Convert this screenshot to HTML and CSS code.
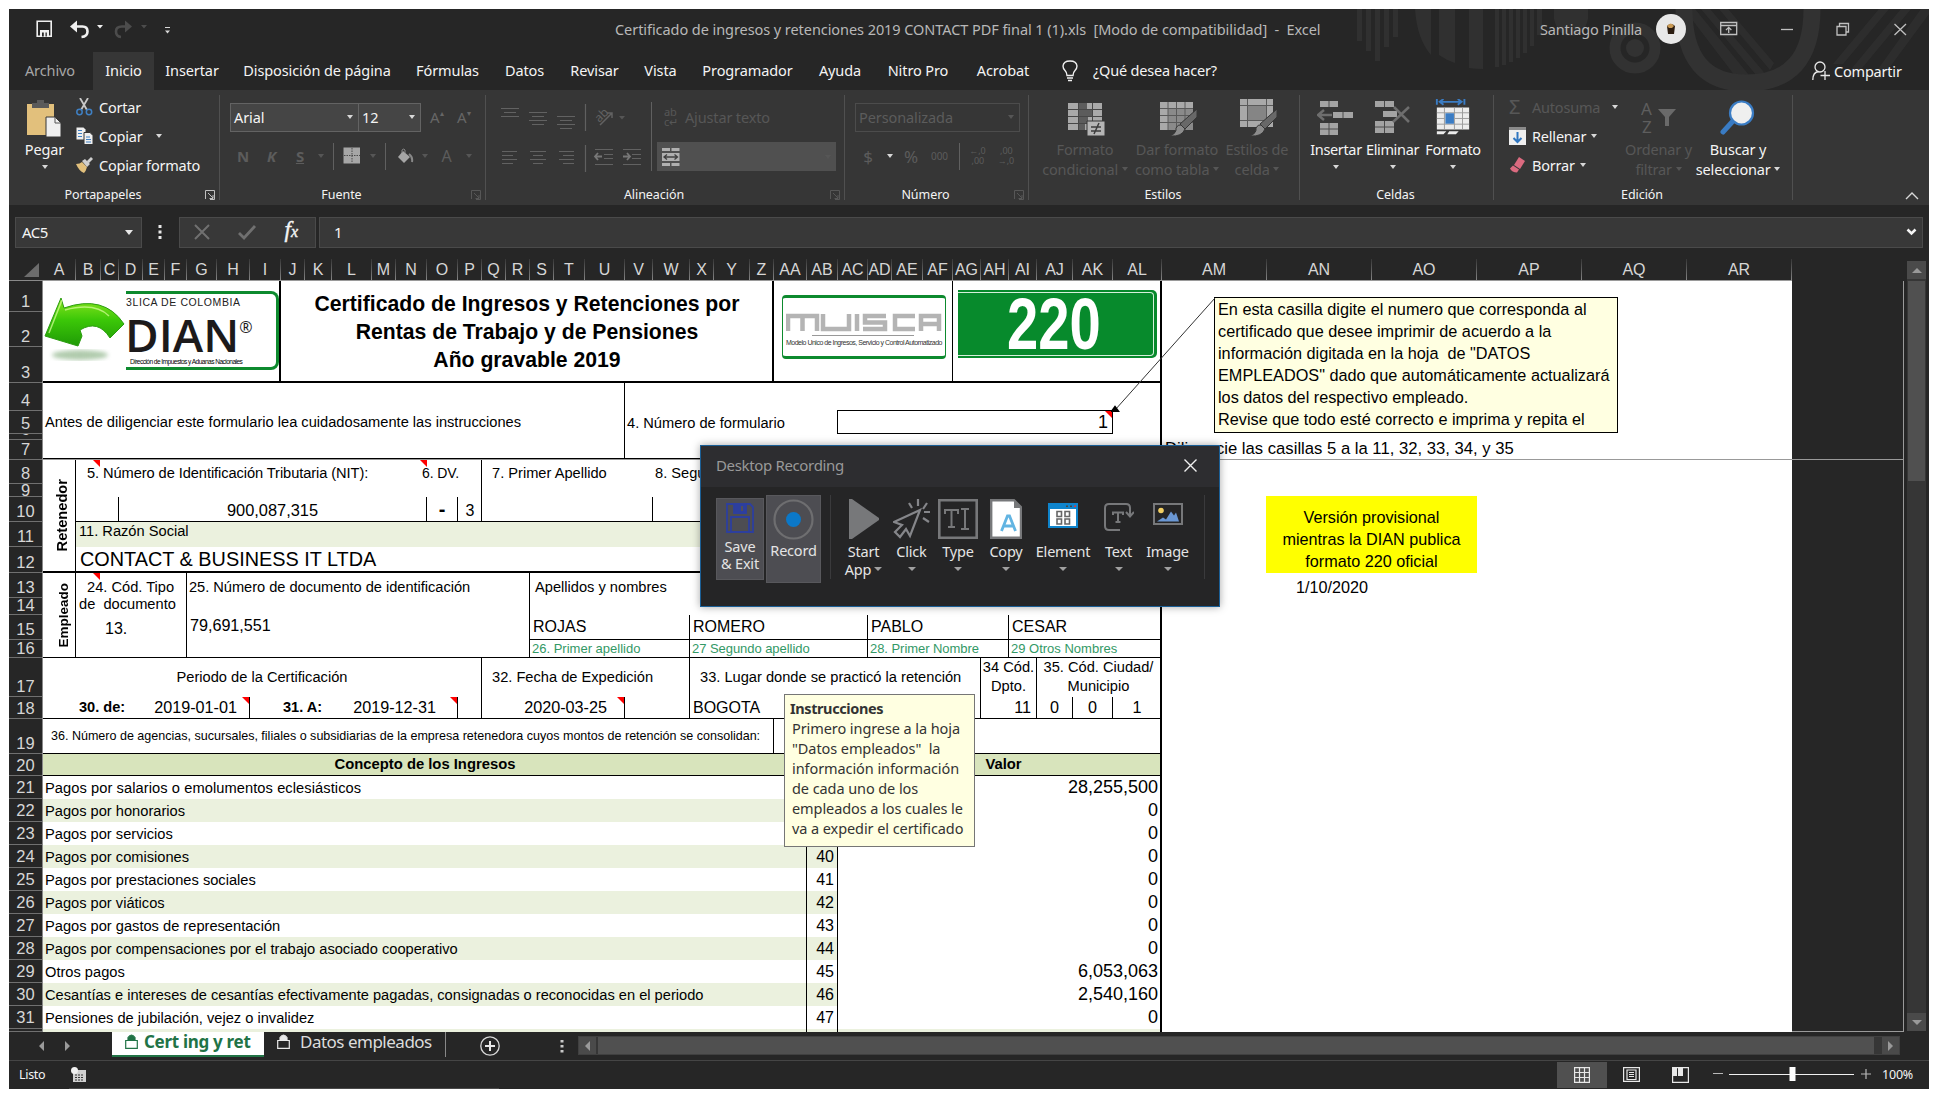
FILE: index.html
```html
<!DOCTYPE html>
<html lang="es">
<head>
<meta charset="utf-8">
<title>Certificado de ingresos y retenciones 2019 - Excel</title>
<link rel="stylesheet" href="styles.css">
</head>
<body>
<div class="win">
  <svg class="decor" width="640" height="81" viewBox="0 0 640 81">
    <g fill="#303030">
      <path d="M68 0h5v32h-5zM77 0h5v42h-5zM86 0h5v52h-5zM95 0h5v38h-5zM104 0h5v28h-5zM126 0h16v46q-14-16-16-46zM150 0h16v54q-9-3-16-8zM180 0h14v60q-8 0-14-1zM206 0h4v58h-4zM213 0h4v56h-4zM220 0h4v53h-4zM227 0h4v49h-4zM234 0h4v44h-4zM241 0h4v37h-4zM248 0h5v26h-5z"/>
      <path d="M265 0h34v10q-4 17-17 17t-17-17z"/>
      <path d="M395 0h11l62 76q-6 4-12 4zM412 0h9l58 68-6 5zM430 0h9l46 54-4 7zM612 0h10l-58 70h-10zM590 0h10l-46 55h-10zM632 0h8v5l-48 65h-10z" opacity=".8"/>
    </g>
    <circle cx="346" cy="39" r="20" fill="none" stroke="#323232" stroke-width="11"/><circle cx="346" cy="39" r="9" fill="#323232"/>
    <path d="M395 0q0 74 62 74 66 0 66-74" fill="none" stroke="#323232" stroke-width="17"/>
  </svg>

  <header class="titlebar">
    <svg class="qat" width="140" height="24" viewBox="0 0 140 24" fill="none">
      <path d="M1.200 3.200h14v15h-14z" stroke="#f0f0f0" stroke-width="1.600"/><path d="M4 12h9v7H4z" fill="#f0f0f0"/><path d="M6 14.500h1.800v4H6zM9.500 14.500h1.300v4H9.500z" fill="#262626"/>
      <path d="M37 8.500h9.500q5 0 5 5t-6 5.500" stroke="#f0f0f0" stroke-width="2.600"/><path d="M34 8.500l7-6v12z" fill="#f0f0f0"/>
      <path d="M61 7h6l-3 3.500z" fill="#f0f0f0"/>
      <path d="M92 8.500h-6q-6 0-6 5t5 5.500" stroke="#4c4c4c" stroke-width="2.600"/><path d="M96 8.500l-7-6v12z" fill="#4c4c4c"/>
      <path d="M105 7h6l-3 3.500z" fill="#4c4c4c"/>
      <path d="M129 9.500h5" stroke="#d8d8d8"/><path d="M129 12.500h5l-2.500 3z" fill="#d8d8d8"/>
    </svg>
    <h1>Certificado de ingresos y retenciones 2019 CONTACT PDF final 1 (1).xls&nbsp; [Modo de compatibilidad]&nbsp; -&nbsp; Excel</h1>
    <div class="user"><span>Santiago Pinilla</span>
      <svg width="30" height="30" viewBox="0 0 30 30"><circle cx="15" cy="15" r="15" fill="#e8e8e8"/><path d="M11 12q4-4 8 0l-1 8h-6z" fill="#2b1c10"/><path d="M11 12q4-5 7 0l-2 2h-3z" fill="#c99a55"/></svg>
    </div>
    <svg class="ctl" width="190" height="20" viewBox="0 0 190 20" fill="none" stroke="#c0c0c0" stroke-width="1.300">
      <path d="M.7 3.500h16v12H.7zM.7 6.500h16M8.700 14V8.500M6 11l2.700-2.600L11.400 11"/><path d="M61 10.500h12"/><path d="M117 7.500h9v8.500h-9zM119.500 7.500V4.500h9V13H126"/><path d="M174.500 5l11.500 11M186 5l-11.500 11"/>
    </svg>
  </header>

  <nav class="tabs">
    <span class="archivo">Archivo</span><span class="on">Inicio</span><span>Insertar</span><span>Disposición de página</span><span>Fórmulas</span><span>Datos</span><span>Revisar</span><span>Vista</span><span>Programador</span><span>Ayuda</span><span>Nitro Pro</span><span>Acrobat</span>
    <svg width="16" height="22" viewBox="0 0 16 22" fill="none" stroke="#f0f0f0" stroke-width="1.400"><path d="M5 15.500q0-3-2-5-2-2-2-4.500Q1.500 1 8 1t7 5q0 2.500-2 4.500t-2 5zM5 18h6M6 20.500h4"/></svg>
    <span class="ask">¿Qué desea hacer?</span>
    <span class="share"><svg width="19" height="20" viewBox="0 0 19 20" fill="none" stroke="#e8e8e8" stroke-width="1.300"><circle cx="8" cy="6" r="5"/><path d="M.8 19q0-8 6-8.500M13 10v9M8.500 14.500h9.500"/></svg>Compartir</span>
  </nav>

  <section class="ribbon">
    <div class="group clip">
      <div class="big">
        <svg width="36" height="38" viewBox="0 0 36 38"><path d="M0 5h27v31H0z" fill="#e2c07c"/><path d="M5 9V4h5V1h7v3h5v5z" fill="#5a5a5a"/><path d="M19 18h9l6 6v14H19z" fill="#efefef" stroke="#363636"/><path d="M28 18v6h6" fill="none" stroke="#555"/></svg>
        <span>Pegar</span><i class="ar"></i>
      </div>
      <div class="rows">
        <div><svg width="17" height="18" viewBox="0 0 17 18" fill="none"><path d="M4 0l7 12M12 0L5 12" stroke="#c8c8c8" stroke-width="1.800"/><circle cx="3.500" cy="14" r="2.700" stroke="#3f80c4" stroke-width="1.500"/><circle cx="13" cy="14" r="2.700" stroke="#3f80c4" stroke-width="1.500"/></svg>Cortar</div>
        <div><svg width="17" height="18" viewBox="0 0 17 18"><path d="M.5.500h7l2 2v10h-9z" fill="#efefef"/><path d="M8 5.500h6l3 3v9H8z" fill="#efefef" stroke="#363636"/><path d="M2 3.500h4M2 6.500h4M2 9.500h4M10 10h4M10 12.500h5M10 15h5" stroke="#3f80c4" stroke-width="1.200"/></svg>Copiar<i class="ar"></i></div>
        <div><svg width="17" height="16" viewBox="0 0 17 16"><path d="M0 7q4 0 6-2l5 5q-1 4-3 6-5-2-8-9z" fill="#e2c07c"/><path d="M6 4l3-2 5 5-3 3zM11 4l4-4 2 2-4 4z" fill="#cfcfcf"/></svg>Copiar formato</div>
      </div>
      <footer>Portapapeles</footer><svg class="la" viewBox="0 0 10 10"><path d="M.5 9V.5H9.500V9.500H5M3 3l5 5M8 5v3.500H4.500"/></svg>
    </div>

    <div class="group font">
      <div class="combos"><span class="combo f">Arial<i class="ar"></i></span><span class="combo s">12<i class="ar"></i></span>
        <span class="sz">A<sup>▴</sup></span><span class="sz b">A<sup>▾</sup></span></div>
      <div class="tools">
        <b>N</b><b><em>K</em></b><b><u>S</u></b><i class="ar off"></i><i class="bar"></i>
        <svg width="18" height="18" viewBox="0 0 18 18"><path d="M.5.500h16.500v16H.5z" fill="#a6a6a6"/><path d="M9 1v15M1 8.500h16" stroke="#4a4a4a" stroke-dasharray="1.500 1"/></svg>
        <i class="ar off"></i><i class="bar"></i>
        <svg width="17" height="17" viewBox="0 0 17 17"><path d="M6 3l7 6-6 6-6-6z" fill="#a6a6a6"/><path d="M5 5V2q2-2 3 0v3" fill="none" stroke="#888"/><path d="M12 6q4 3 3 8" fill="none" stroke="#888" stroke-width="2"/></svg>
        <i class="ar off"></i><span class="A">A</span><i class="ar off"></i>
      </div>
      <footer>Fuente</footer><svg class="la off" viewBox="0 0 10 10"><path d="M.5 9V.5H9.500V9.500H5M3 3l5 5M8 5v3.500H4.500"/></svg>
    </div>

    <div class="group align">
      <svg class="al" width="165" height="80" viewBox="0 0 165 80" fill="none" stroke="#626262" stroke-width="1.200">
        <path d="M1 4.500h18M4 8.500h12M1 12.500h18"/><path d="M29 8.500h18M32 12.500h12M29 16.500h18M32 20.500h12"/><path d="M57 12.500h18M60 16.500h12M57 20.500h18M60 24.500h12"/>
        <path d="M85.500 0v27M85.500 41v27" stroke="#606060"/>
        <path d="M100 21L112 9M107 9h5v5" stroke-width="1.500"/><path d="M119 12h6l-3 3.500z" fill="#565656" stroke="none"/>
        <path d="M2 47.500h15M2 51.500h11M2 55.500h15M2 59.500h11"/><path d="M30 47.500h16M33 51.500h10M30 55.500h16M33 59.500h10"/><path d="M59 47.500h15M63 51.500h11M59 55.500h15M63 59.500h11"/>
        <path d="M95 45.500h18M104 50.500h9M104 54.500h9M95 60.500h18"/><path d="M102 52.500h-7M98 49l-3 3.500 3 3.500" stroke="#777" stroke-width="1.800"/>
        <path d="M123 45.500h18M132 50.500h9M132 54.500h9M123 60.500h18"/><path d="M123 52.500h7M127 49l3 3.500-3 3.500" stroke="#777" stroke-width="1.800"/>
        <text x="96" y="17" transform="rotate(-45 100 14)" font-family="Noto Sans" font-size="12" fill="#626262" stroke="none">ab</text>
      </svg>
      <div class="wrap">
        <div class="aj"><span class="abc">ab<br>c↵</span>Ajustar texto</div>
        <div class="merge"><svg width="18" height="18" viewBox="0 0 18 18"><path d="M0 0h8v3H0zM9.500 0h8v3h-8zM0 5h17.500v8H0zM0 15h8v3H0zM9.500 15h8v3h-8z" fill="#b0b0b0"/><path d="M2 9h13M5 6.500L2 9l3 2.500M12.500 6.500L15.500 9l-3 2.500" fill="none" stroke="#404040" stroke-width="1.300"/></svg><i class="ar off"></i></div>
      </div>
      <footer>Alineación</footer><svg class="la off" viewBox="0 0 10 10"><path d="M.5 9V.5H9.500V9.500H5M3 3l5 5M8 5v3.500H4.500"/></svg>
    </div>

    <div class="group num">
      <span class="combo p">Personalizada<i class="ar off"></i></span>
      <div class="ntools"><span class="cur">$</span><i class="ar"></i><span class="pc">%</span><span class="ooo">000</span><i class="bar"></i><span class="dec"><b>←</b>,0<br>&nbsp;,00</span><span class="dec">&nbsp;,00<br><b>→</b>,0</span></div>
      <footer>Número</footer><svg class="la off" viewBox="0 0 10 10"><path d="M.5 9V.5H9.500V9.500H5M3 3l5 5M8 5v3.500H4.500"/></svg>
    </div>

    <div class="group styles">
      <div class="big dim"><svg width="38" height="38" viewBox="0 0 38 38"><path d="M0 4h34v27H0z" fill="#a9a9a9"/><path d="M11 4h8v6h-8zM11 11h13v6H11zM11 18h9v6h-9zM11 25h6v6h-6z" fill="#5c5c5c"/><path d="M0 10.500h34M0 17.500h34M0 24.500h34M10.500 4v27M24.500 4v27" stroke="#474747"/><path d="M19 22h18v15H19z" fill="#b5b5b5" stroke="#363636"/><path d="M23 28h10M23 32h10M31 24l-5 11" stroke="#3c3c3c" stroke-width="1.500"/></svg><span>Formato<br>condicional <i class="ar off"></i></span></div>
      <div class="big dim"><svg width="38" height="38" viewBox="0 0 38 38"><path d="M0 3h33v28H0z" fill="#a9a9a9"/><path d="M8 10h25v21H8z" fill="#8a8a8a"/><path d="M0 9.500h33M0 16.500h33M0 23.500h33M8 3v28M16.500 3v28M25 3v28" stroke="#5a5a5a"/><path d="M37 10v8L25 30l-5-5z" fill="#686868" stroke="#363636"/><path d="M21 26l4 4q-3 8-15 7 7-3 6-8 2-4 5-3z" fill="#8c8c8c" stroke="#363636"/></svg><span>Dar formato<br>como tabla <i class="ar off"></i></span></div>
      <div class="big dim"><svg width="38" height="38" viewBox="0 0 38 38"><path d="M0 0h33v28H0z" fill="#a9a9a9"/><path d="M8 7h18v14H8z" fill="#858585"/><path d="M0 6.500h33M0 21.500h33M7.500 0v28M26.500 0v28" stroke="#5a5a5a"/><path d="M37 10v8L25 30l-5-5z" fill="#686868" stroke="#363636"/><path d="M21 26l4 4q-3 8-15 7 7-3 6-8 2-4 5-3z" fill="#8c8c8c" stroke="#363636"/></svg><span>Estilos de<br>celda <i class="ar off"></i></span></div>
      <footer>Estilos</footer>
    </div>

    <div class="group cells">
      <div class="big"><svg width="38" height="38" viewBox="0 0 38 38"><path d="M3 2h18v6H3zM16 13h20v6H16zM3 24h18v12H3z" fill="#a3a3a3"/><path d="M12 2v6M26 13v6M12 24v12M3 30h18" stroke="#4a4a4a"/><path d="M15 16H2M7 11l-6 5 6 5" fill="none" stroke="#6e6e6e" stroke-width="2.500"/></svg><span>Insertar</span><i class="ar"></i></div>
      <div class="big"><svg width="38" height="38" viewBox="0 0 38 38"><path d="M1 2h19v6H1zM9 12h14v6H9zM1 22h19v12H1z" fill="#a3a3a3"/><path d="M10.500 2v6M10.500 22v12M1 28h19" stroke="#4a4a4a"/><path d="M20 8l15 15M35 8L19 23" stroke="#6e6e6e" stroke-width="2.500"/></svg><span>Eliminar</span><i class="ar"></i></div>
      <div class="big"><svg width="38" height="40" viewBox="0 0 38 40"><path d="M2 0v6M31 0v6M5 3h23M9 0L5 3l4 3M24 0l4 3-4 3" fill="none" stroke="#3a7cc4" stroke-width="2"/><path d="M2 9h34v23H2z" fill="#ececec"/><path d="M2 14.500h34M2 26.500h34M10 9v23M20.500 9v23M29 9v23M2 20.500h8M21 20.500h15" stroke="#9a9a9a"/><path d="M11 15h9v11h-9z" fill="#3a7cc4"/><path d="M2 34h10l-3 3H2zM15 34h10l-3 3h-9z" fill="#ececec"/></svg><span>Formato</span><i class="ar"></i></div>
      <footer>Celdas</footer>
    </div>

    <div class="group edit">
      <div class="rows">
        <div class="dim"><span class="sigma">Σ</span>Autosuma<i class="ar lit"></i></div>
        <div><svg width="17" height="18" viewBox="0 0 17 18"><path d="M0 0h17v18H0z" fill="#efefef"/><path d="M0 0h17v3H0z" fill="#8a8a8a"/><path d="M8.500 5v10M4.500 11l4 4 4-4" fill="none" stroke="#2f76c0" stroke-width="2"/></svg>Rellenar<i class="ar t"></i></div>
        <div><svg width="17" height="16" viewBox="0 0 17 16"><path d="M10 0l6 4-5 8-6-4z" fill="#dc6b80"/><path d="M4 8.500l6 4-2 3q-5 0-7-4z" fill="#dc6b80"/></svg>Borrar<i class="ar t"></i></div>
      </div>
      <div class="big dim"><svg width="36" height="36" viewBox="0 0 36 36"><text x="0" y="15" font-family="Noto Sans" font-size="17" fill="#5e5e5e">A</text><text x="1" y="33" font-family="Noto Sans" font-size="17" fill="#5e5e5e">Z</text><path d="M17 9h18l-7 8v9h-4v-9z" fill="#6a6a6a"/></svg><span>Ordenar y<br>filtrar <i class="ar off"></i></span></div>
      <div class="big find"><svg width="36" height="36" viewBox="0 0 36 36"><path d="M3 32l10-11" stroke="#3a7cc4" stroke-width="5" stroke-linecap="round"/><circle cx="21.500" cy="13" r="11.500" fill="#efefef" stroke="#3a7cc4" stroke-width="2.200"/></svg><span>Buscar y<br>seleccionar <i class="ar"></i></span></div>
      <footer>Edición</footer>
    </div>
    <svg class="collapse" width="14" height="9" viewBox="0 0 14 9"><path d="M1 8l6-6 6 6" fill="none" stroke="#d8d8d8" stroke-width="1.400"/></svg>
  </section>

  <section class="fbar">
    <div class="name">AC5<i class="ar w"></i></div>
    <svg class="dots" width="4" height="16" viewBox="0 0 4 16"><path d="M.5 1h3v3h-3zM.5 6.500h3v3h-3zM.5 12h3v3h-3z" fill="#e8e8e8"/></svg>
    <div class="fx">
      <svg width="16" height="16" viewBox="0 0 16 16"><path d="M1 1l14 14M15 1L1 15" stroke="#707070" stroke-width="2"/></svg>
      <svg width="18" height="16" viewBox="0 0 18 16"><path d="M1 9l5 5L17 2" fill="none" stroke="#707070" stroke-width="2.800"/></svg>
      <span><i>f</i><i class="x">x</i></span>
    </div>
    <div class="formula">1<svg width="11" height="8" viewBox="0 0 11 8"><path d="M1.500 1.500l4 4 4-4" fill="none" stroke="#f4f4f4" stroke-width="2.500"/></svg></div>
  </section>

  <main class="book">
    <div class="corner"><svg width="15" height="14" viewBox="0 0 15 14"><path d="M15 0v14H0z" fill="#6c6c6c"/></svg></div>
    <div class="colheads cols"><span>A</span><span>B</span><span>C</span><span>D</span><span>E</span><span>F</span><span>G</span><span>H</span><span>I</span><span>J</span><span>K</span><span>L</span><span>M</span><span>N</span><span>O</span><span>P</span><span>Q</span><span>R</span><span>S</span><span>T</span><span>U</span><span>V</span><span>W</span><span>X</span><span>Y</span><span>Z</span><span>AA</span><span>AB</span><span>AC</span><span>AD</span><span>AE</span><span>AF</span><span>AG</span><span>AH</span><span>AI</span><span>AJ</span><span>AK</span><span>AL</span><span>AM</span><span>AN</span><span>AO</span><span>AP</span><span>AQ</span><span>AR</span></div>
    <div class="rowheads rws"><span>1</span><span>2</span><span>3</span><span>4</span><span>5</span><span>6</span><span>7</span><span>8</span><span>9</span><span>10</span><span>11</span><span>12</span><span>13</span><span>14</span><span>15</span><span>16</span><span>17</span><span>18</span><span>19</span><span>20</span><span>21</span><span>22</span><span>23</span><span>24</span><span>25</span><span>26</span><span>27</span><span>28</span><span>29</span><span>30</span><span>31</span><span></span></div>
    <div class="pane">
    <div class="sheet cols rws">
      <div class="c dian">
        <svg class="back" width="83" height="70" viewBox="0 0 83 70"><defs><linearGradient id="gr" x1="0" y1="0" x2="0" y2="1"><stop offset="0" stop-color="#8be61e"/><stop offset=".45" stop-color="#3cc808"/><stop offset="1" stop-color="#1f9a06"/></linearGradient><filter id="bl"><feGaussianBlur stdDeviation="2"/></filter></defs><ellipse cx="36" cy="58" rx="28" ry="5" fill="#8fb58a" opacity=".7" filter="url(#bl)"/><path d="M17 1l3 10Q60-3 80 27l-14 14Q54 22 36 33l2 6-4 10L1 39z" fill="url(#gr)" stroke="#2b9c10"/><path d="M18 3l-13 33M21 13q30-8 44 6" stroke="#d8ff9c" stroke-width="1.500" fill="none" opacity=".7"/></svg>
        <div class="dlogo"><small>3LICA DE COLOMBIA</small><strong>DIAN<sup>®</sup></strong><em>Dirección de Impuestos y Aduanas Nacionales</em></div>
      </div>
      <div class="c title">Certificado de Ingresos y Retenciones por<br>Rentas de Trabajo y de Pensiones<br>Año gravable 2019</div>
      <div class="c muisca"><div class="mlogo">
        <svg width="156" height="21" viewBox="0 0 156 21" fill="none" stroke="#b4b4b4" stroke-width="4.500"><path d="M2 19V4h29v15M16.500 4v15M37 2v15h26V2M71 2v17M100 4H79v6.500h20V17H77M129 4h-20v13h20M135 19V4h18v15M135 12h18"/></svg>
        <hr><small>Modelo Unico de Ingresos, Servicio y Control Automatizado</small></div></div>
      <div class="c f220"><div class="plate"><div><b>220</b></div></div></div>
      <div class="c antes">Antes de diligenciar este formulario lea cuidadosamente las instrucciones</div>
      <div class="c nform">4. Número de formulario</div>
      <div class="c top4"></div>
      <div class="c ac5 note">1</div>
      <div class="c dilig">Diligencie las casillas 5 a la 11, 32, 33, 34, y 35</div>
      <div class="c side ret"><span>Retenedor</span></div>
      <div class="c nit note">5. Número de Identificación Tributaria (NIT):</div>
      <div class="c dv">6. DV.</div><div class="c dvn note"></div>
      <div class="c pa">7. Primer Apellido</div><div class="c sa">8. Segundo Apellido</div>
      <div class="c b10"></div><div class="c nitv">900,087,315</div><div class="c dash">-</div><div class="c three">3</div><div class="c q10"></div><div class="c w10"></div>
      <div class="c rs">11. Razón Social</div><div class="c contact">CONTACT &amp; BUSINESS IT LTDA</div>
      <div class="c ver">Versión provisional<br>mientras la DIAN publica<br>formato 220 oficial</div>
      <div class="c date">1/10/2020</div>
      <div class="c side emp"><span>Empleado</span></div>
      <div class="c tipo note"><span>24. Cód. Tipo<br>de&nbsp; documento</span><b>13.</b></div>
      <div class="c doc">25. Número de documento de identificación<span>79,691,551</span></div>
      <div class="c ayn">Apellidos y nombres</div>
      <div class="c nm n1">ROJAS</div><div class="c nm n2">ROMERO</div><div class="c nm n3">PABLO</div><div class="c nm n4">CESAR</div>
      <div class="c gl g1">26. Primer apellido</div><div class="c gl g2">27 Segundo apellido</div><div class="c gl g3">28. Primer Nombre</div><div class="c gl g4">29 Otros Nombres</div>
      <div class="c per">Periodo de la Certificación</div><div class="c fex">32. Fecha de Expedición</div><div class="c lug">33. Lugar donde se practicó la retención</div><div class="c dpt">34 Cód.<br>Dpto.</div><div class="c ciu">35. Cód. Ciudad/<br>Municipio</div>
      <div class="c r18 de"><b>30. de:</b></div><div class="c r18 d1 note">2019-01-01</div><div class="c r18 aa"><b>31. A:</b></div><div class="c r18 d2 note">2019-12-31</div><div class="c r18 p18"></div><div class="c r18 d3 note">2020-03-25</div><div class="c r18 v18"></div><div class="c r18 bog">BOGOTA</div><div class="c r18 x11">11</div><div class="c r18 z1">0</div><div class="c r18 z2">0</div><div class="c r18 z3">1</div>
      <div class="c ag">36. Número de agencias, sucursales, filiales o subsidiarias de la empresa retenedora cuyos montos de retención se consolidan:</div><div class="c agr"></div>
      <div class="c hd ing">Concepto de los Ingresos</div><div class="c hd val">Valor</div>
      <div class="income">
        <div><span>Pagos por salarios o emolumentos eclesiásticos</span><span></span><span>28,255,500</span></div>
        <div><span>Pagos por honorarios</span><span></span><span>0</span></div>
        <div><span>Pagos por servicios</span><span></span><span>0</span></div>
        <div><span>Pagos por comisiones</span><span>40</span><span>0</span></div>
        <div><span>Pagos por prestaciones sociales</span><span>41</span><span>0</span></div>
        <div><span>Pagos por viáticos</span><span>42</span><span>0</span></div>
        <div><span>Pagos por gastos de representación</span><span>43</span><span>0</span></div>
        <div><span>Pagos por compensaciones por el trabajo asociado cooperativo</span><span>44</span><span>0</span></div>
        <div><span>Otros pagos</span><span>45</span><span>6,053,063</span></div>
        <div><span>Cesantías e intereses de cesantías efectivamente pagadas, consignadas o reconocidas en el periodo</span><span>46</span><span>2,540,160</span></div>
        <div><span>Pensiones de jubilación, vejez o invalidez</span><span>47</span><span>0</span></div>
        <div class="cut"><span></span><span></span><span></span></div>
      </div>
      <div class="edge"></div>
    </div>
    <div class="freeze"></div>
    <svg class="leader" width="110" height="130" viewBox="0 0 110 130"><path d="M4 113L104 1" stroke="#333" stroke-width="1"/><path d="M1 114l3-4 3 4z" stroke="#000" stroke-width="2"/></svg>
    <div class="comment">En esta casilla digite el numero que corresponda al<br>certificado que desee imprimir de acuerdo a la<br>información digitada en la hoja&nbsp; de "DATOS<br>EMPLEADOS" dado que automáticamente actualizará<br>los datos del respectivo empleado.<br>Revise que todo esté correcto e imprima y repita el</div>
    <div class="tip"><b>Instrucciones</b><p>Primero ingrese a la hoja<br>"Datos empleados"&nbsp; la<br>información información<br>de cada uno de los<br>empleados a los cuales le<br>va a expedir el certificado</p></div>
    </div>
    <div class="vs"><i class="up"></i><div class="thumb"></div><i class="dn"></i></div>
  </main>

  <section class="sheets">
    <svg class="nav" width="34" height="12" viewBox="0 0 34 12"><path d="M5 1v10L0 6zM26 1v10l5-5z" fill="#9a9a9a"/></svg>
    <div class="tab act"><svg width="13" height="15" viewBox="0 0 13 15"><path d="M3 7V3.500Q6.500-1.500 10 3.500V7z" fill="#217346" stroke="#217346" stroke-width="1.200"/><path d="M.7 6.500h11.600v7.800H.7z" fill="#fff" stroke="#217346" stroke-width="1.200"/></svg>Cert ing y ret</div>
    <div class="tab"><svg width="13" height="15" viewBox="0 0 13 15"><path d="M3 7V3.500Q6.500-1.500 10 3.500V7z" fill="#e8e8e8" stroke="#e8e8e8" stroke-width="1.200"/><path d="M.7 6.500h11.600v7.800H.7z" fill="#262626" stroke="#e8e8e8" stroke-width="1.200"/></svg>Datos empleados</div>
    <svg class="plus" width="20" height="20" viewBox="0 0 20 20"><circle cx="10" cy="10" r="9.200" fill="none" stroke="#d8d8d8" stroke-width="1.300"/><path d="M10 5v10M5 10h10" stroke="#e8e8e8" stroke-width="2"/></svg>
    <svg class="dots2" width="4" height="16" viewBox="0 0 4 16"><path d="M.5 2h3v2.500h-3zM.5 7h3v2.500h-3zM.5 12h3v2.500h-3z" fill="#c8c8c8"/></svg>
    <div class="hs"><i class="lf"></i><div class="hthumb"></div><i class="rt"></i></div>
  </section>

  <footer class="status">
    <span class="listo">Listo</span>
    <svg class="mac" width="16" height="16" viewBox="0 0 16 16"><path d="M2 3h13v12H2z" fill="#d0d0d0"/><path d="M4 8h9M4 10.500h9M4 13h9" stroke="#333" stroke-dasharray="2 1"/><circle cx="3.500" cy="3.500" r="3.500" fill="#f0f0f0"/></svg>
    <div class="view on"><svg width="16" height="16" viewBox="0 0 16 16"><path d="M.6.600h14.800v14.800H.6zM5.500 0v16M10.500 0v16M0 5.500h16M0 10.500h16" fill="none" stroke="#e8e8e8" stroke-width="1.200"/></svg></div>
    <div class="view"><svg width="17" height="15" viewBox="0 0 17 15"><path d="M.6.600h15.800v13.800H.6zM4 3h9v9.500H4zM6 5.500h5M6 7.500h5M6 9.500h5" fill="none" stroke="#e8e8e8" stroke-width="1.200"/></svg></div>
    <div class="view"><svg width="17" height="16" viewBox="0 0 17 16"><path d="M.6.600h15.800v14.800H.6z" fill="none" stroke="#e8e8e8" stroke-width="1.200"/><path d="M1 0h4v9H1zM6 0h5v9H6z" fill="#e8e8e8"/></svg></div>
    <svg class="zoom" width="160" height="16" viewBox="0 0 160 16"><path d="M0 7.500h10M148 8h10M153 3v10" stroke="#b8b8b8" stroke-width="1.200"/><path d="M16 8.500h125" stroke="#f0f0f0" stroke-width="1.200"/><path d="M76.500 1h6v14h-6z" fill="#fff"/></svg>
    <span class="pct">100%</span>
  </footer>
</div>

<div class="dlg">
  <header><span>Desktop Recording</span><svg width="13" height="13" viewBox="0 0 13 13"><path d="M.5.500l12 12M12.500.500l-12 12" stroke="#f0f0f0" stroke-width="1.400"/></svg></header>
  <div class="acts">
    <div class="save btn"><svg width="28" height="30" viewBox="0 0 28 30" fill="none" stroke="#2d3f9e" stroke-width="1.800"><path d="M1 1h23l3 3v25H1zM5 29V14h18v15"/><path d="M8 1h12v9H8z" fill="#2d3f9e"/><path d="M15 3h2v5h-2z" fill="#50505a" stroke="none"/></svg><span>Save<br>&amp; Exit</span></div>
    <div class="rec btn"><svg width="41" height="41" viewBox="0 0 41 41"><circle cx="20.500" cy="20.500" r="19" fill="none" stroke="#6e6e70" stroke-width="2.200"/><circle cx="20.500" cy="20.500" r="7.500" fill="#0b78c8"/></svg><span>Record</span></div>
    <i class="sep"></i>
    <div class="a w1"><svg width="30" height="40" viewBox="0 0 30 40"><path d="M0 0h3l27 19v2L3 40H0z" fill="#77787a"/></svg><span>Start</span><span class="app">App<i class="ar g"></i></span></div>
    <div class="a w2"><svg width="38" height="40" viewBox="0 0 38 40" fill="none" stroke="#85868a" stroke-width="2.200"><path d="M27 11L1 23l8 3-7 7 5 5 6-8 4 7zM25 0v7M16 4l3 5M34 4l-4 6M31 13h6M30 19l6 4"/></svg><span>Click</span><i class="ar g"></i></div>
    <div class="a w3"><svg width="40" height="40" viewBox="0 0 40 40" fill="none" stroke="#77787a" stroke-width="2.600"><path d="M1.300 1.300h37.400v37.400H1.300z"/><path d="M7 15v-4h13v4M13.500 11v17M10 28h7M23 10h8M27 10v20M23 30h8" stroke-width="2"/></svg><span>Type</span><i class="ar g"></i></div>
    <div class="a w4"><svg width="32" height="40" viewBox="0 0 32 40"><path d="M1.200 1.200H24l7 7v30.600H1.200z" fill="#fff" stroke="#77787a" stroke-width="2.400"/><path d="M24 1v8h7" fill="#77787a"/><path d="M11.500 32l6-15h2l6 15M13.500 27h10" fill="none" stroke="#62b4e2" stroke-width="2.800"/></svg><span>Copy</span><i class="ar g"></i></div>
    <div class="a w5"><svg width="30" height="40" viewBox="0 0 30 40"><path d="M0 4h30v25H0z" fill="#0e84cc"/><path d="M2 10h26v17H2z" fill="#fff"/><path d="M9 12.500h4.500v5H9zM17 12.500h4.500v5H17zM9 20h4.500v5H9zM17 20h4.500v5H17z" fill="none" stroke="#666" stroke-width="1.600"/><path d="M18 6.500h2v1.500h-2zM22 6.500h2v1.500h-2z" fill="#444"/><path d="M26 6.500h2v1.500h-2z" fill="#e33"/></svg><span>Element</span><i class="ar g"></i></div>
    <div class="a w6"><svg width="30" height="40" viewBox="0 0 30 40" fill="none" stroke="#77787a" stroke-width="2"><path d="M16 31H5q-4 0-4-4V9q0-4 4-4h17q4 0 4 4v8M22 13l4 4.500 4-4.500M9 16v-2.500h10V16M14 14v9M11.500 23h5"/></svg><span>Text</span><i class="ar g"></i></div>
    <div class="a w7"><svg width="30" height="40" viewBox="0 0 30 40"><path d="M1 5h28v20H1z" fill="none" stroke="#77787a" stroke-width="2"/><circle cx="8" cy="11.500" r="2.800" fill="#f2cf63"/><path d="M4 22.500l6-4 3 2 5-8 3 4 2-3 3 9z" fill="#6a97d4"/></svg><span>Image</span><i class="ar g"></i></div>
    <i class="sep end"></i>
  </div>
</div>
</body>
</html>
```
FILE: styles.css
```css
* { box-sizing: border-box; }
body { margin: 0; background: #fff; font-family: "Noto Sans", "Open Sans", sans-serif; font-size: 14.5px; letter-spacing: -.1px; color: #f4f4f4; width: 1938px; height: 1098px; overflow: hidden; position: relative; }
svg { flex: none; display: block; }
.win { margin: 9px; width: 1920px; height: 1080px; background: #262626; display: flex; flex-direction: column; position: relative; }
.decor { position: absolute; top: 0; right: 0; }
.ar { width: 0; height: 0; border: 3.500px solid transparent; border-top: 4px solid #d8d8d8; border-bottom: 0; display: inline-block; flex: none; }
.ar.off { border-top-color: #565656; }
.ar.g { border-top-color: #a0a0a0; }
.ar.w { border-width: 4.500px; border-bottom: 0; border-top: 5px solid #e8e8e8; }
.bar { width: 1px; height: 27px; background: #606060; }
.dim { color: #575757; }

/* title bar */
.titlebar { height: 43px; display: flex; align-items: center; position: relative; color: #b8b8b8; }
.qat { margin: -1px 0 0 27px; }
.titlebar h1 { font-size: 14.5px; letter-spacing: -.065px; font-weight: 400; margin: -3px 0 0 439px; width: 925px; white-space: nowrap; }
.user { display: flex; align-items: center; width: 146px; justify-content: space-between; white-space: nowrap; margin-top: -3px; letter-spacing: -.15px; }
.ctl { margin: -3px 0 0 34px; }

/* ribbon tabs */
.tabs { height: 38px; display: grid; align-items: stretch; position: relative; grid-template-columns: 84px 61px 76px 174px 87px 67px 73px 59px 115px 70px 86px 84px 47px 720px 1fr; white-space: nowrap; }
.tabs > span { display: flex; align-items: center; justify-content: center; padding-bottom: 2px; }
.tabs .archivo { color: #a6a6a6; padding-right: 2px; }
.tabs .on { background: #363636; }
.tabs > svg { align-self: center; margin-left: 17px; }
.tabs .ask { justify-content: flex-start; padding-left: 1px; letter-spacing: -.2px; }
.tabs .share { justify-content: flex-start; gap: 3px; padding-bottom: 0; letter-spacing: -.2px; }

/* ribbon */
.ribbon { height: 115px; background: #363636; display: grid; grid-template-columns: 211px 266px 359px 184px 271px 194px 299px 136px; position: relative; }
.group { position: relative; display: flex; height: 105px; margin-top: 5px; border-right: 1px solid #505050; align-items: flex-start; }
.group footer { position: absolute; left: 0; right: 22px; bottom: -3px; text-align: center; font-size: 12.500px; line-height: 17px; letter-spacing: -.05px; }
.la { position: absolute; right: 4px; bottom: 0; width: 10px; height: 10px; fill: none; stroke: #c0c0c0; stroke-width: 1; }
.la.off { stroke: #575757; }
.big { display: flex; flex-direction: column; align-items: center; text-align: center; line-height: 20px; white-space: nowrap; padding-top: 4px; flex: none; }
.big svg { height: 38px; margin-bottom: 2px; }
.big > .ar { margin-top: 6px; }
.big span .ar { vertical-align: 4px; }
.rows { margin-top: -3px; }
.rows > div { display: flex; align-items: center; height: 29px; gap: 6px; white-space: nowrap; }
.rows svg { width: 17px; }
.clip .big { width: 71px; }
.clip .rows { margin-left: -4px; letter-spacing: -.2px; }
.clip .rows .ar { margin-left: 7px; }
.combo { border: 1px solid #636363; background: #454545; height: 29px; display: flex; align-items: center; justify-content: space-between; padding: 0 5px 1px 3px; }
.font { flex-direction: column; }
.combos { display: flex; margin: 8px 0 0 10px; align-items: center; }
.combo.f { width: 129px; } .combo.s { width: 62px; border-left: 0; }
.sz { color: #666; font-size: 15px; margin-left: 9px; width: 18px; height: 22px; white-space: nowrap; }
.sz sup { font-size: 8px; vertical-align: 7px; line-height: 0; }
.tools { display: grid; grid-template-columns: 28px 29px 28px 14px 11px 25px 18px 7px 32px 8px 35px 9px; justify-items: center; align-items: center; margin: 10px 0 0 9px; height: 28px; color: #5c5c5c; font-size: 15px; }
.tools .A { font-size: 16px; }
.al { margin: 9px 0 0 14px; }
.wrap { border-left: 1px solid #606060; margin-top: 7px; height: 69px; padding-left: 5px; margin-left: -14px; width: 185px; }
.aj { display: flex; align-items: center; height: 30px; gap: 6px; padding-left: 7px; color: #575757; white-space: nowrap; letter-spacing: -.15px; }
.abc { font-size: 11px; line-height: 10px; width: 15px; }
.merge { width: 179px; height: 29px; margin-top: 10px; background: #505050; display: flex; align-items: center; justify-content: space-between; padding: 0 5px; }
.num { flex-direction: column; }
.combo.p { width: 165px; margin: 8px 0 0 10px; background: none; border-color: #4c4c4c; color: #5c5c5c; }
.ntools { display: grid; grid-template-columns: 28px 15px 28px 29px 11px 25px 32px; justify-items: center; align-items: center; margin: 10px 0 0 9px; height: 28px; color: #5c5c5c; }
.cur, .pc { font-size: 17px; } .ooo { font-size: 10px; } .dec { font-size: 9px; line-height: 10px; }
.styles .big { width: 90px; letter-spacing: -.15px; } .styles .big:nth-child(1) { width: 109px; padding-left: 3px; } .styles .big:nth-child(2) { width: 78px; } .styles .big:nth-child(3) { width: 82px; }
.styles .big svg { margin-left: 3px; }
.styles footer { right: 2px; }
.cells { padding-left: 9px; } .cells .big { width: 54px; letter-spacing: -.35px; } .cells .big:nth-child(2) { width: 59px; } .cells .big:nth-child(3) { width: 62px; }
.edit .rows { margin-left: 15px; width: 117px; letter-spacing: -.2px; }
.edit .rows .t { margin-left: -1px; } .edit .rows .lit { margin-left: auto; margin-right: 8px; }
.sigma { width: 17px; font-size: 20px; line-height: 20px; }
.edit .big { width: 65px; letter-spacing: -.15px; } .edit .find { width: 94px; }
.cells footer { right: 8px; padding-left: 6px; }
.edit footer { right: 2px; }
.collapse { position: absolute; right: 10px; bottom: 5px; }

/* formula bar */
.fbar { height: 54px; display: flex; align-items: center; padding: 0 6px; font-size: 15px; letter-spacing: -.5px; }
.fbar > div { height: 31px; border: 1px solid #4a4a4a; background: #383838; display: flex; align-items: center; }
.name { width: 127px; padding: 0 8px 0 6px; justify-content: space-between; }
.dots { margin: 0 17px 0 16px; }
.fx { width: 137px; justify-content: space-between; padding: 0 17px 0 14px; }
.fx span { font: italic 23px "Liberation Serif", serif; line-height: 24px; letter-spacing: 0; padding-bottom: 3px; -webkit-text-stroke: .4px; }
.fx .x { font-size: 16px; }
.formula { flex: 1; margin-left: 3px; padding: 0 5px 0 14px; justify-content: space-between; }

/* workbook */
.book { height: 773px; display: grid; grid-template: 22px 751px / 34px 1861px 25px; font-family: "Liberation Sans", Arial, sans-serif; letter-spacing: 0; position: relative; }
.cols { display: grid; grid-template-columns: 33px 25px 18px 24px 22px 22px 30px 33px 31px 24px 27px 40px 24px 31px 31px 24px 24px 24px 24px 31px 40px 28px 37px 24px 36px 24px 33px 31px 30px 24px 31px 30px 28px 28px 28px 36px 40px 49px 105px 105px 105px 105px 105px 105px; }
.rws { display: grid; grid-template-rows: 31px 35px 36px 28px 23px 6px 20px 24px 13px 25px 25px 26px 25px 17px 25px 18px 39px 22px 35px 22px repeat(11, 23px) 3px; }
.corner { display: flex; justify-content: flex-end; padding: 4px 4px 0 0; border-bottom: 1px solid #8a8a8a; }
.colheads { font-size: 16px; color: #d6d6d6; line-height: 21px; border-bottom: 1px solid #9a9a9a; width: 1749px; }
.colheads span { white-space: nowrap; border-right: 1px solid; border-image: linear-gradient(#333, #888) 1; min-width: 0; display: flex; justify-content: center; }
.rowheads { grid-row: 2; border-right: 1px solid #8a8a8a; font-size: 16.500px; color: #d6d6d6; }
.rowheads span { display: flex; align-items: flex-end; justify-content: center; line-height: 20px; border-bottom: 1px solid #707070; overflow: hidden; min-height: 0; }
.rowheads span:nth-child(9) { align-items: center; }
.rowheads span:nth-child(14), .rowheads span:nth-child(16) { line-height: 17px; }
.rowheads span:nth-child(n+21) { align-items: center; }
.pane { position: relative; border-right: 1px solid #9a9a9a; border-bottom: 1px solid #9a9a9a; }
.sheet { width: 1749px; height: 751px; background: #fff; color: #000; font-size: 14.650px; overflow: hidden; }
.c { display: flex; align-items: center; white-space: nowrap; min-width: 0; min-height: 0; line-height: 17px; position: relative; }
.note::after { content: ""; position: absolute; top: 0; right: 0; border-top: 7px solid #f00; border-left: 7px solid transparent; }

/* form heading */
.dian { grid-area: 1/1/4/10; border-right: 2px solid #000; border-bottom: 2px solid #000; align-items: flex-start; }
.back { margin: 16px 0 0 1px; }
.dlogo { margin: 10px 0 0 -1px; width: 154px; height: 79px; border: 3px solid #0d8a2e; border-left: 0; border-radius: 0 8px 8px 0; padding: 1px 0 0 0; display: flex; flex-direction: column; white-space: nowrap; }
.dlogo small { font-size: 10.500px; line-height: 14px; color: #222; letter-spacing: .6px; }
.dlogo strong { font: 600 46px/44px "Open Sans", sans-serif; letter-spacing: 0; margin: 3px 0 0 -1px; color: #1c1a1b; height: 44px; }
.dlogo sup { font-size: 16px; font-weight: 400; vertical-align: 19px; line-height: 0; }
.dlogo em { font-style: normal; font-size: 6.600px; line-height: 9px; letter-spacing: -.55px; margin: 1px 0 0 4px; }
.title { grid-area: 1/10/4/27; border-right: 2px solid #000; border-bottom: 2px solid #000; justify-content: center; text-align: center; font-weight: 700; font-size: 21.200px; line-height: 28px; padding: 1px 0 0 1px; }
.muisca { grid-area: 1/27/4/33; border-right: 1px solid #000; border-bottom: 2px solid #000; align-items: flex-start; padding: 14px 0 0 8px; }
.mlogo { width: 164px; height: 64px; border: solid #0d8a2e; border-width: 3px 1px; border-radius: 4px; padding: 14px 0 0 3px; }
.mlogo hr { border: 0; border-top: 1.500px solid #999; width: 102px; margin: 2px 0 1px 26px; }
.mlogo small { font-size: 7px; line-height: 12px; letter-spacing: -.5px; display: block; color: #333; }
.f220 { grid-area: 1/33/4/39; border-bottom: 2px solid #000; align-items: flex-start; padding: 9px 0 0 5px; }
.plate { width: 199px; height: 68px; background: #078a2c; border-radius: 0 5px 5px 0; padding: 2px 3px 2px 0; }
.plate > div { display: flex; height: 64px; border: 1px solid #d6f0dc; border-left: 0; border-radius: 0 4px 4px 0; align-items: center; justify-content: center; padding-right: 4px; }
.plate b { font-size: 73px; line-height: 60px; color: #fff; transform: scaleX(.77); }
.antes { grid-area: 4/1/8/22; border-right: 1px solid #000; border-bottom: 1px solid #000; padding: 4px 0 0 2px; height: 76px; }
.nform { grid-area: 5/22/6/28; padding: 1px 0 0 2px; }
.top4 { grid-area: 4/22/8/39; border-bottom: 1px solid #000; height: 76px; }
.ac5 { grid-area: 5/28/6/38; border: 1px solid #000; margin: -1px 0 0 30px; justify-content: flex-end; padding-right: 4px; font-size: 18px; }
.dilig { grid-area: 7/39/8/43; padding-left: 3px; font-size: 16.660px; padding-bottom: 4px; }

/* retention agent */
.side { border-right: 1px solid #000; justify-content: center; font-weight: 700; }
.side span { writing-mode: vertical-rl; transform: rotate(180deg); }
.ret { grid-area: 8/1/13/2; border-bottom: 2px solid #000; padding-left: 6px; }
.nit { grid-area: 8/2/9/14; padding: 3px 0 0 11px; letter-spacing: -.08px; }
.nit.note::after { right: auto; left: 17px; }
.dv { grid-area: 8/15/9/17; padding: 3px 0 0 0; margin-left: -5px; font-size: 14px; letter-spacing: -.1px; border-right: 1px solid #000; }
.dvn { grid-area: 8/14/9/15; }
.pa { grid-area: 8/17/9/21; padding: 3px 0 0 10px; }
.sa { grid-area: 8/23/9/28; padding: 3px 0 0 2px; }
.b10 { grid-area: 10/2/11/4; border-right: 1px solid #000; border-bottom: 1px solid #000; }
.nitv { grid-area: 10/4/11/15; border-right: 1px solid #000; border-bottom: 1px solid #000; justify-content: center; font-size: 16.400px; padding-top: 2px; }
.dash { grid-area: 10/15/11/16; border-right: 1px solid #000; border-bottom: 1px solid #000; justify-content: center; font-weight: 700; font-size: 20px; }
.three { grid-area: 10/16/11/17; border-bottom: 1px solid #000; justify-content: center; font-size: 16px; padding-top: 2px; }
.q10 { grid-area: 9/16/11/17; border-right: 1px solid #000; }
.w10 { grid-area: 10/17/11/39; border-bottom: 1px solid #000; background: linear-gradient(#000, #000) 170px 0 / 1px 100% no-repeat; }
.rs { grid-area: 11/2/12/39; background: #ebf1de; padding: 0 0 6px 3px; }
.contact { grid-area: 12/2/13/39; border-bottom: 2px solid #000; font-size: 19.850px; padding: 0 0 0 4px; }
.ver { grid-area: 10/40/13/42; background: #ff0; justify-content: center; text-align: center; font-size: 16.200px; line-height: 22px; padding-top: 8px; margin: -1px 0 0 -1px; }
.date { grid-area: 13/40/14/41; justify-content: flex-end; font-size: 16.200px; padding: 3px 4px 0 0; }

/* employee */
.emp { grid-area: 13/1/17/2; border-bottom: 1px solid #000; padding-left: 9px; font-size: 13.500px; }
.tipo { grid-area: 13/2/17/7; border-right: 1px solid #000; border-bottom: 1px solid #000; flex-direction: column; align-items: flex-start; padding: 6px 0 0 3px; }
.tipo span { text-indent: 8px; }
.tipo b { font-weight: 400; font-size: 16px; margin: 7px 0 0 26px; }
.tipo.note::after { right: auto; left: 17px; }
.doc { grid-area: 13/7/17/19; border-bottom: 1px solid #000; border-right: 1px solid #000; flex-direction: column; align-items: flex-start; padding: 6px 0 0 2px; letter-spacing: -.03px; }
.doc span { font-size: 16.200px; margin: 21px 0 0 1px; }
.ayn { grid-area: 13/19/14/30; padding: 4px 0 0 5px; }
.nm { font-size: 16px; padding: 0 0 1px 3px; border-bottom: 1px solid #000; border-left: 1px solid #000; margin-left: -1px; }
.n1 { grid-area: 15/19/16/24; } .n2 { grid-area: 15/24/16/30; } .n3 { grid-area: 15/30/16/35; } .n4 { grid-area: 15/35/16/39; }
.gl { font-size: 13px; color: #339966; padding: 0 0 1px 2px; border-bottom: 1px solid #000; border-left: 1px solid #000; margin-left: -1px; }
.g1 { grid-area: 16/19/17/24; } .g2 { grid-area: 16/24/17/30; letter-spacing: -.05px; } .g3 { grid-area: 16/30/17/35; letter-spacing: -.05px; } .g4 { grid-area: 16/35/17/39; }

/* period and place */
.per { grid-area: 17/1/18/17; border-right: 1px solid #000; justify-content: center; padding-bottom: 1px; }
.fex { grid-area: 17/17/18/24; border-right: 1px solid #000; padding: 0 0 1px 10px; }
.lug { grid-area: 17/24/18/34; border-right: 1px solid #000; padding: 0 0 0 10px; }
.dpt { grid-area: 17/34/18/36; border-right: 1px solid #000; text-align: center; line-height: 19px; justify-content: center; padding-bottom: 1px; }
.ciu { grid-area: 17/36/18/39; text-align: center; line-height: 19px; justify-content: center; padding: 0 2px 1px 0; }
.r18 { border-bottom: 1px solid #000; font-size: 16.200px; }
.de { grid-area: 18/1/19/5; padding-left: 36px; font-size: 14.600px; }
.d1 { grid-area: 18/5/19/9; justify-content: flex-end; padding-right: 12px; border-right: 1px solid #000; }
.aa { grid-area: 18/9/19/12; padding-left: 33px; font-size: 14.600px; }
.d2 { grid-area: 18/12/19/16; justify-content: flex-end; padding-right: 21px; border-right: 1px solid #000; }
.p18 { grid-area: 18/16/19/17; border-right: 1px solid #000; }
.d3 { grid-area: 18/17/19/22; justify-content: flex-end; padding-right: 17px; border-right: 1px solid #000; }
.v18 { grid-area: 18/22/19/24; border-right: 1px solid #000; } .bog { grid-area: 18/24/19/34; border-right: 1px solid #000; padding-left: 3px; font-size: 16px; }
.x11 { grid-area: 18/34/19/36; border-right: 1px solid #000; justify-content: flex-end; padding-right: 5px; }
.z1, .z2, .z3 { justify-content: center; border-right: 1px solid #000; }
.z1 { grid-area: 18/36/19/37; } .z2 { grid-area: 18/37/19/38; } .z3 { grid-area: 18/38/19/39; }
.ag { grid-area: 19/1/20/27; border-right: 1px solid #000; border-bottom: 1px solid #000; font-size: 12.540px; padding-left: 8px; } .agr { grid-area: 19/27/20/39; border-bottom: 1px solid #000; }

/* income table */
.hd { background: #d8e4bc; border-bottom: 1px solid #000; font-weight: 700; font-size: 14.800px; justify-content: center; padding-bottom: 1px; }
.ing { grid-area: 20/1/21/28; } .val { grid-area: 20/28/21/39; padding-left: 38px; }
.income { grid-area: 21/1/33/39; }
.income > div { display: grid; grid-template-columns: 764px 31px 1fr; height: 23px; line-height: 23px; white-space: nowrap; background: #fff; }
.income > div:nth-child(even) { background: linear-gradient(#ebf1de, #ebf1de) 0 0 / 795px 100% no-repeat; }
.income > .cut:nth-child(n) { height: 3px; background: #ebf1de; }
.income span { border-right: 1px solid #000; }
.income span:nth-child(1) { padding: 1px 0 0 2px; }
.income > div:first-child span:first-child { letter-spacing: .08px; }
.income span:nth-child(2) { font-size: 16px; text-align: right; padding-right: 3px; line-height: 24px; height: 23px; }
.income span:nth-child(3) { font-size: 18px; text-align: right; padding-right: 4px; border: 0; }
.cut span:nth-child(n) { height: 3px; padding: 0; }
.edge { grid-area: 1/38/33/39; border-right: 2px solid #000; z-index: 1; }
.freeze { position: absolute; left: 0; right: 0; top: 178px; border-top: 1px solid #999; }
.leader { position: absolute; left: 1068px; top: 16px; z-index: 2; }
.comment { position: absolute; left: 1171px; top: 16px; width: 404px; height: 136px; border: 1px solid #000; background: #ffffe1; color: #000; font-size: 16.250px; line-height: 22px; padding: 0 0 0 3px; white-space: nowrap; overflow: hidden; }
.tip { position: absolute; left: 741px; top: 413px; width: 191px; height: 153px; border: 1px solid #767676; background: #ffffe1; color: #333; font: 14.500px/20px "Noto Sans", sans-serif; letter-spacing: -.08px; padding: 3px 0 0 5px; white-space: nowrap; z-index: 3; }
.tip b { letter-spacing: -.4px; }
.tip p { margin: 0 0 0 2px; }
.vs { grid-area: 1/3/3/4; display: flex; flex-direction: column; width: 19px; margin: 2px 0 1px 3px; background: #363636; }
.vs i, .hs i { background: #4a4a4a; display: grid; place-items: center; flex: none; height: 18px; }
.vs i::before, .hs i::before { content: ""; border: 5px solid transparent; }
.vs .up::before { border-bottom-color: #999; border-top: 0; } .vs .dn::before { border-top-color: #999; border-bottom: 0; }
.hs .lf::before { border-right-color: #999; border-left: 0; } .hs .rt::before { border-left-color: #999; border-right: 0; }
.vs .thumb { height: 200px; background: #505050; margin: 2px 1px auto; }

/* sheet tabs */
.sheets { height: 29px; display: flex; border-bottom: 1px solid #454545; font-size: 17px; letter-spacing: -.5px; white-space: nowrap; }
.nav { margin: 8px 38px 0 30px; }
.nav + .act { margin-left: 1px; }
.tab { height: 26px; display: flex; gap: 8px; padding: 0 0 6px 13px; align-items: center; margin-top: -1px; color: #dcdcdc; }
.act { width: 152px; background: #fff; color: #217346; font-weight: 700; border-bottom: 2px solid #217346; padding-bottom: 4px; letter-spacing: -.3px; gap: 6px; }
.tab:nth-child(3) { width: 182px; gap: 10px; border-right: 1px solid #888; }
.plus { margin: 4px 0 0 34px; } .dots2 { margin: 6px 0 0 60px; }
.hs { margin: 4px 0 0 14px; display: flex; width: 1322px; height: 19px; background: #363636; border: 1px solid #404040; }
.hs i { width: 17px; height: 17px; } .hthumb { background: #505050; width: 1277px; margin: 0 8px 0 2px; }
.status { height: 28px; display: flex; align-items: center; font-size: 12.500px; letter-spacing: -.3px; padding-bottom: 1px; background: linear-gradient(#4a4a4a, #4a4a4a) 60px 100% / 430px 1px no-repeat; }
.listo { margin-left: 10px; width: 52px; } .mac { margin-right: 1470px; }
.view { width: 49px; height: 26px; display: grid; place-items: center; flex: none; } .view.on { background: #505050; width: 50px; }
.zoom { margin: -2px 0 0 8px; } .pct { margin-left: 9px; letter-spacing: -.2px; }

/* recorder window */
.dlg { position: absolute; z-index: 10; left: 700px; top: 445px; width: 520px; height: 162px; border: 1px solid #1b5f96; background: #252526; box-shadow: 0 0 8px rgba(0, 0, 0, .35); letter-spacing: -.2px; }
.dlg header { height: 41px; background: #2d2d30; color: #999; display: flex; align-items: center; justify-content: space-between; padding: 0 22px 3px 15px; font-size: 15px; letter-spacing: -.35px; }
.acts { display: grid; grid-template-columns: 50px 55px 20px 45px 51px 42px 54px 60px 51px 47px 20px; padding-left: 15px; align-items: start; color: #e4e4e4; line-height: 18px; font-size: 14.500px; }
.acts > div { display: flex; flex-direction: column; align-items: center; text-align: center; white-space: nowrap; }
.btn { background: #4d4d52; border: 1px solid #58585c; }
.save { width: 48px; height: 82px; margin-top: 11px; padding-top: 4px; line-height: 17px; } .save span { margin-top: 5px; }
.rec { height: 88px; margin-top: 8px; padding-top: 3px; } .rec span { margin-top: 1px; }
.sep { width: 1px; height: 84px; margin: 8px 0 0 9px; background: #3a3a3c; } .sep.end { margin-left: 13px; }
.a { padding-top: 12px; } .a span { margin-top: 3px; } .a .ar { margin-top: 7px; border-width: 4px 4px 0; border-top-style: solid; }
.a .app { margin-top: 0; } .app .ar { vertical-align: 4px; margin: 0 0 0 3px; }
```
